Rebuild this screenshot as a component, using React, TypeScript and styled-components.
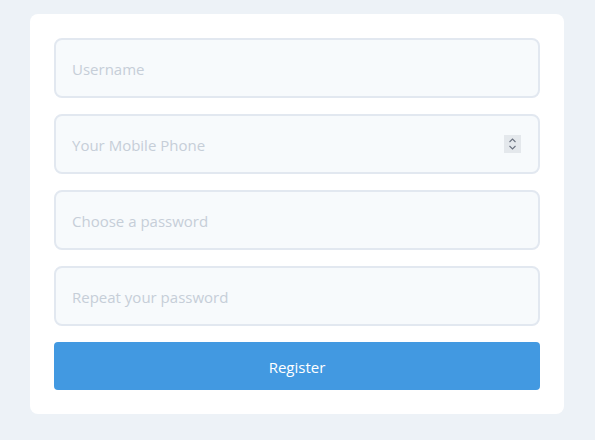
import React from 'react';
import styled, { createGlobalStyle } from 'styled-components';

const GlobalStyle = createGlobalStyle`
  html, body {
    margin: 0;
    padding: 0;
    background: #edf2f7;
    font-family: "Open Sans", "Noto Sans", sans-serif;
  }
`;

const Page = styled.div`
  padding: 14px 31px 0 30px;
`;

const Card = styled.form`
  background: #ffffff;
  border-radius: 8px;
  padding: 24px;
  display: flex;
  flex-direction: column;
  gap: 16px;
`;

const FieldWrap = styled.div`
  position: relative;
`;

const Field = styled.input`
  box-sizing: border-box;
  display: block;
  width: 100%;
  height: 60px;
  padding: 2px 17px 0 16px;
  border: 2px solid #e2e8f0;
  border-radius: 8px;
  background: #f7fafc;
  font-family: inherit;
  font-size: 15px;
  color: #2d3748;
  outline: none;
  -moz-appearance: textfield;

  &::placeholder {
    color: #c6ced8;
  }

  &::-webkit-inner-spin-button,
  &::-webkit-outer-spin-button {
    -webkit-appearance: none;
    margin: 0;
  }
`;

const Spinner = styled.svg`
  position: absolute;
  right: 19px;
  top: 21px;
  width: 17px;
  height: 18px;
  pointer-events: none;
`;

const Submit = styled.button`
  height: 48px;
  border: none;
  border-radius: 4px;
  background: #4299e1;
  color: #ffffff;
  font-family: inherit;
  font-size: 15px;
  padding-top: 2px;
  cursor: pointer;
`;

const fields = [
  { type: 'text', placeholder: 'Username' },
  { type: 'number', placeholder: 'Your Mobile Phone' },
  { type: 'password', placeholder: 'Choose a password' },
  { type: 'password', placeholder: 'Repeat your password' },
];

const App: React.FC = () => {
  return (
    <>
      <GlobalStyle />
      <Page>
        <Card onSubmit={(e) => e.preventDefault()}>
          {fields.map((f) => (
            <FieldWrap key={f.placeholder}>
              <Field type={f.type} placeholder={f.placeholder} />
              {f.type === 'number' && (
                <Spinner viewBox="0 0 17 18">
                  <rect width="17" height="18" fill="#e4e8ec" />
                  <path d="M5.5 7 L8.5 4 L11.5 7" fill="none" stroke="#6b7280" strokeWidth="1.1" />
                  <path d="M5.5 11 L8.5 14 L11.5 11" fill="none" stroke="#6b7280" strokeWidth="1.1" />
                </Spinner>
              )}
            </FieldWrap>
          ))}
          <Submit type="submit">Register</Submit>
        </Card>
      </Page>
    </>
  );
};

export default App;
